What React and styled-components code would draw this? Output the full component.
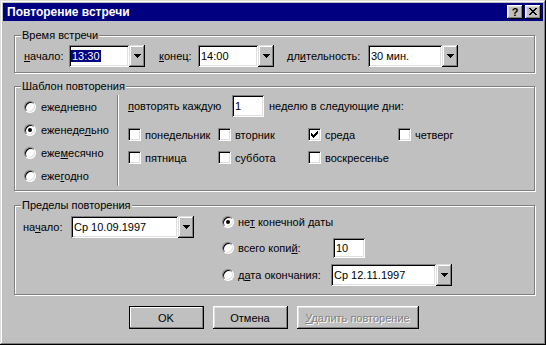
import React from "react";
import styled, { createGlobalStyle } from "styled-components";

const GlobalStyle = createGlobalStyle`
  html, body {
    margin: 0;
    padding: 0;
    background: #c0c0c0;
  }
  body {
    font-family: "Liberation Sans", Arial, sans-serif;
    font-size: 11px;
    color: #000;
  }
  u {
    text-underline-offset: 1px;
  }
`;

const Window = styled.div`
  width: 546px;
  height: 345px;
  box-sizing: border-box;
  padding: 3px;
  background: #c0c0c0;
  box-shadow: inset -1px -1px #000, inset 1px 1px #dfdfdf, inset -2px -2px #808080,
    inset 2px 2px #fff;
  display: flex;
  flex-direction: column;
`;

const TitleBar = styled.div`
  height: 18px;
  flex: none;
  background: #000080;
  color: #fff;
  display: flex;
  align-items: center;
  padding: 0 2px 0 4px;
  font-weight: bold;
  font-size: 12px;
`;

const Title = styled.span`
  flex: 1;
`;

const TitleButtons = styled.div`
  display: flex;
  gap: 2px;
`;

const TitleButton = styled.div`
  width: 16px;
  height: 14px;
  box-sizing: border-box;
  background: #c0c0c0;
  color: #000;
  font-size: 11px;
  font-weight: bold;
  box-shadow: inset -1px -1px #000, inset 1px 1px #fff, inset -2px -2px #808080,
    inset 2px 2px #dfdfdf;
  display: flex;
  align-items: center;
  justify-content: center;
  padding-bottom: 1px;
`;

const Body = styled.div`
  padding: 14px 8px 0 11px;
  display: flex;
  flex-direction: column;
`;

const GroupBox = styled.div`
  position: relative;
  box-sizing: border-box;
  height: ${(p) => p.$h}px;
  margin-top: ${(p) => p.$mt || 0}px;
  padding: ${(p) => p.$pad};
  border: 1px solid #808080;
  box-shadow: inset 1px 1px #fff, 1px 1px #fff;
  display: flex;
  align-items: flex-start;
`;

const GroupTitle = styled.span`
  position: absolute;
  top: -7px;
  left: 6px;
  padding: 0 1px;
  background: #c0c0c0;
  line-height: 13px;
`;

const Row = styled.div`
  display: flex;
  align-items: center;
  height: ${(p) => p.$h || 22}px;
  margin-top: ${(p) => p.$mt || 0}px;
`;

const Label = styled.span`
  flex: none;
  width: ${(p) => (p.$w ? `${p.$w}px` : "auto")};
  margin-left: ${(p) => p.$ml || 0}px;
  white-space: nowrap;
`;

const Combo = styled.div`
  display: flex;
  flex: none;
`;

const Field = styled.div`
  box-sizing: border-box;
  flex: none;
  width: ${(p) => p.$w}px;
  height: ${(p) => p.$h || 22}px;
  margin-left: ${(p) => p.$ml || 0}px;
  background: #fff;
  box-shadow: inset 1px 1px #808080, inset -1px -1px #fff, inset 2px 2px #000,
    inset -2px -2px #dfdfdf;
  padding: 0 3px;
  display: flex;
  align-items: center;
  white-space: nowrap;
`;

const Selected = styled.span`
  background: #000080;
  color: #fff;
  padding: 0 1px;
  margin-left: -1px;
  line-height: 12px;
`;

const DropButton = styled.div`
  box-sizing: border-box;
  width: 16px;
  height: 22px;
  background: #c0c0c0;
  box-shadow: inset -1px -1px #000, inset 1px 1px #dfdfdf, inset -2px -2px #808080,
    inset 2px 2px #fff;
  display: flex;
  align-items: center;
  justify-content: center;
`;

const RadioColumn = styled.div`
  width: 93px;
  flex: none;
  display: flex;
  flex-direction: column;
`;

const RadioRow = styled.div`
  display: flex;
  align-items: center;
  height: ${(p) => p.$h || 23}px;
  margin-top: ${(p) => p.$mt || 0}px;
`;

const RadioDot = styled.span`
  flex: none;
  box-sizing: border-box;
  width: 12px;
  height: 12px;
  margin-right: ${(p) => p.$mr || 5}px;
  border-radius: 50%;
  background: #fff;
  border: 1px solid;
  border-color: #808080 #fff #fff #808080;
  box-shadow: inset 1px 1px #000, inset -1px -1px #dfdfdf;
  display: flex;
  align-items: center;
  justify-content: center;
  &::after {
    content: "";
    display: ${(p) => (p.$on ? "block" : "none")};
    width: 4px;
    height: 4px;
    border-radius: 50%;
    background: #000;
  }
`;

const Separator = styled.div`
  flex: none;
  width: 0;
  height: 91px;
  border-left: 1px solid #808080;
  border-right: 1px solid #fff;
`;

const RightColumn = styled.div`
  margin-left: ${(p) => p.$ml || 0}px;
  margin-top: ${(p) => p.$mt || 0}px;
  display: flex;
  flex-direction: column;
`;

const DaysGrid = styled.div`
  display: grid;
  grid-template-columns: repeat(4, 90px);
  grid-auto-rows: 23px;
  margin-top: 6px;
`;

const DayItem = styled.label`
  display: flex;
  align-items: center;
  white-space: nowrap;
`;

const CheckBox = styled.span`
  flex: none;
  box-sizing: border-box;
  width: 13px;
  height: 13px;
  margin-right: 4px;
  background: #fff;
  border: 1px solid;
  border-color: #808080 #fff #fff #808080;
  box-shadow: inset 1px 1px #000, inset -1px -1px #dfdfdf;
  display: flex;
  align-items: center;
  justify-content: center;
`;

const LeftPart = styled.div`
  display: flex;
  align-items: center;
  margin-top: ${(p) => p.$mt || 0}px;
`;

const ButtonRow = styled.div`
  display: flex;
  justify-content: center;
  gap: 9px;
  margin-top: 11px;
  padding-right: 2px;
`;

const Button = styled.div`
  box-sizing: border-box;
  width: ${(p) => p.$w}px;
  height: 23px;
  background: #c0c0c0;
  display: flex;
  align-items: center;
  justify-content: center;
  color: ${(p) => (p.$disabled ? "#808080" : "#000")};
  text-shadow: ${(p) => (p.$disabled ? "1px 1px 0 #fff" : "none")};
  box-shadow: ${(p) =>
    p.$default
      ? "inset 0 0 0 1px #000, inset -2px -2px #808080, inset 2px 2px #fff"
      : "inset -1px -1px #000, inset 1px 1px #fff, inset -2px -2px #808080, inset 2px 2px #dfdfdf"};
`;

function Arrow() {
  return (
    <svg width="7" height="4" viewBox="0 0 7 4" shapeRendering="crispEdges">
      <path d="M0 0h7v1h-1v1h-1v1h-1v1h-1v-1h-1v-1h-1v-1h-1z" fill="#000" />
    </svg>
  );
}

function Check() {
  return (
    <svg width="7" height="7" viewBox="0 0 7 7" shapeRendering="crispEdges">
      <path
        d="M6 0h1v1h-1z M5 1h2v1h-2z M0 2h1v1h-1z M4 2h3v1h-3z M0 3h2v1h-2z M3 3h3v1h-3z M0 4h5v1h-5z M1 5h3v1h-3z M2 6h1v1h-1z"
        fill="#000"
      />
    </svg>
  );
}

function CloseGlyph() {
  return (
    <svg width="8" height="7" viewBox="0 0 8 7" shapeRendering="crispEdges">
      <path
        d="M0 0h2v1h-2z M6 0h2v1h-2z M1 1h2v1h-2z M5 1h2v1h-2z M2 2h4v1h-4z M3 3h2v1h-2z M2 4h4v1h-4z M1 5h2v1h-2z M5 5h2v1h-2z M0 6h2v1h-2z M6 6h2v1h-2z"
        fill="#000"
      />
    </svg>
  );
}

function ComboBox({ width, children }) {
  return (
    <Combo>
      <Field $w={width}>{children}</Field>
      <DropButton>
        <Arrow />
      </DropButton>
    </Combo>
  );
}

const patterns = [
  { key: "daily", label: <>еже<u>д</u>невно</> },
  { key: "weekly", label: <>еженеде<u>л</u>ьно</>, on: true },
  { key: "monthly", label: <>еже<u>м</u>есячно</> },
  { key: "yearly", label: <>еже<u>г</u>одно</> },
];

const days = [
  { name: "понедельник" },
  { name: "вторник" },
  { name: "среда", checked: true },
  { name: "четверг" },
  { name: "пятница" },
  { name: "суббота" },
  { name: "воскресенье" },
];

export default function App() {
  return (
    <>
      <GlobalStyle />
      <Window>
        <TitleBar>
          <Title>Повторение встречи</Title>
          <TitleButtons>
            <TitleButton>?</TitleButton>
            <TitleButton>
              <CloseGlyph />
            </TitleButton>
          </TitleButtons>
        </TitleBar>

        <Body>
          <GroupBox $h={38} $pad="9px 0 0 9px">
            <GroupTitle>Время встречи</GroupTitle>
            <Row>
              <Label $w={45}>
                <u>н</u>ачало:
              </Label>
              <ComboBox width={60}>
                <Selected>13:30</Selected>
              </ComboBox>
              <Label $w={39} $ml={14}>
                <u>к</u>онец:
              </Label>
              <ComboBox width={60}>14:00</ComboBox>
              <Label $w={81} $ml={13}>
                дл<u>и</u>тельность:
              </Label>
              <ComboBox width={74}>30 мин.</ComboBox>
            </Row>
          </GroupBox>

          <GroupBox $h={105} $mt={13} $pad="8px 0 0 9px">
            <GroupTitle>Шаблон повторения</GroupTitle>
            <RadioColumn>
              {patterns.map((p) => (
                <RadioRow key={p.key}>
                  <RadioDot $on={p.on} />
                  <span>{p.label}</span>
                </RadioRow>
              ))}
            </RadioColumn>
            <Separator />
            <RightColumn $ml={9}>
              <Row>
                <Label $w={104}>
                  <u>п</u>овторять каждую
                </Label>
                <Field $w={32}>1</Field>
                <Label $ml={5}>неделю в следующие дни:</Label>
              </Row>
              <DaysGrid>
                {days.map((d) => (
                  <DayItem key={d.name}>
                    <CheckBox>{d.checked && <Check />}</CheckBox>
                    {d.name}
                  </DayItem>
                ))}
              </DaysGrid>
            </RightColumn>
          </GroupBox>

          <GroupBox $h={90} $mt={14} $pad="0 0 0 8px">
            <GroupTitle>Пределы повторения</GroupTitle>
            <LeftPart $mt={10}>
              <Label $w={48}>
                на<u>ч</u>ало:
              </Label>
              <ComboBox width={107}>Ср 10.09.1997</ComboBox>
            </LeftPart>
            <RightColumn $ml={28} $mt={7}>
              <RadioRow $h={18}>
                <RadioDot $on $mr={4} />
                <span>
                  не<u>т</u> конечной даты
                </span>
              </RadioRow>
              <RadioRow $h={20} $mt={7}>
                <RadioDot $mr={4} />
                <Label $w={95}>
                  всего копи<u>й</u>:
                </Label>
                <Field $w={32} $h={20}>
                  10
                </Field>
              </RadioRow>
              <RadioRow $h={22} $mt={6}>
                <RadioDot $mr={4} />
                <Label $w={93}>
                  д<u>а</u>та окончания:
                </Label>
                <ComboBox width={105}>Ср 12.11.1997</ComboBox>
              </RadioRow>
            </RightColumn>
          </GroupBox>

          <ButtonRow>
            <Button $w={75} $default>
              OK
            </Button>
            <Button $w={75}>Отмена</Button>
            <Button $w={122} $disabled>
              <span>
                <u>У</u>далить повторение
              </span>
            </Button>
          </ButtonRow>
        </Body>
      </Window>
    </>
  );
}
